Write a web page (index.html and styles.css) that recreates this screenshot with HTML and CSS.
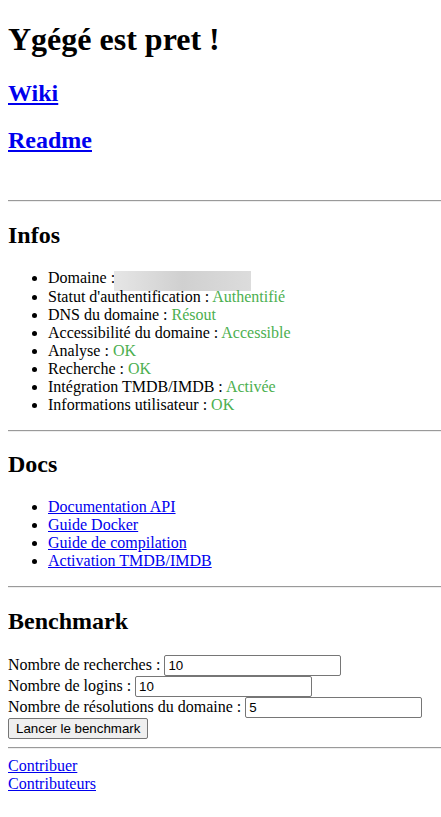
FILE: index.html
```html
<!DOCTYPE html>
<html lang="fr">
<head>
<meta charset="utf-8">
<title>Ygégé</title>
<link rel="stylesheet" href="styles.css">
</head>
<body class="page">
<h1 class="title">Ygégé est pret !</h1>
<h2 class="big-link"><a href="#">Wiki</a></h2>
<h2 class="big-link"><a href="#">Readme</a></h2>
<br>
<hr class="rule">
<h2 class="section-title">Infos</h2>
<ul class="list">
  <li>Domaine :<span class="masked"></span></li>
  <li>Statut d'authentification : <span class="ok">Authentifié</span></li>
  <li>DNS du domaine : <span class="ok">Résout</span></li>
  <li>Accessibilité du domaine : <span class="ok">Accessible</span></li>
  <li>Analyse : <span class="ok">OK</span></li>
  <li>Recherche : <span class="ok">OK</span></li>
  <li>Intégration TMDB/IMDB : <span class="ok">Activée</span></li>
  <li>Informations utilisateur : <span class="ok">OK</span></li>
</ul>
<hr class="rule">
<h2 class="section-title">Docs</h2>
<ul class="list">
  <li><a href="#">Documentation API</a></li>
  <li><a href="#">Guide Docker</a></li>
  <li><a href="#">Guide de compilation</a></li>
  <li><a href="#">Activation TMDB/IMDB</a></li>
</ul>
<hr class="rule">
<h2 class="section-title">Benchmark</h2>
<form class="bench">
  <label>Nombre de recherches : <input class="field" type="text" value="10"></label><br>
  <label>Nombre de logins : <input class="field" type="text" value="10"></label><br>
  <label>Nombre de résolutions du domaine : <input class="field" type="text" value="5"></label><br>
  <button class="btn" type="button">Lancer le benchmark</button>
</form>
<hr class="rule">
<a href="#">Contribuer</a><br>
<a href="#">Contributeurs</a>
</body>
</html>
```
FILE: styles.css
```css
html {
  margin: 0;
  padding: 0;
}
.page {
  margin: 0 0 8px 8px;
  padding: 0;
  font-family: "Liberation Serif", "Times New Roman", serif;
  font-size: 16px;
  color: #000;
  background: #fff;
}
.title {
  font-size: 32px;
  margin: 21.44px 0;
}
.big-link, .section-title {
  font-size: 24px;
  margin: 19.92px 0;
}
a { color: #0000ee; }
.rule {
  border: none;
  border-top: 1px solid #9a9a9a;
  border-bottom: 1px solid #eeeeee;
  margin: 8px 0;
  height: 0;
}
.list {
  margin: 16px 0;
  padding-left: 40px;
}
.ok { color: #4caf50; }
.masked {
  display: inline-block;
  width: 137px;
  height: 20px;
  margin: -3px 0 -3px -1px;
  vertical-align: -5px;
  background: linear-gradient(90deg, #e6e6e6 0%, #d0d0d0 50%, #dcdcdc 100%);
}
.bench { margin: 0; }
.field {
  box-sizing: border-box;
  font-family: "Liberation Sans", Arial, sans-serif;
  font-size: 13.33px;
  width: 177px;
  height: 21px;
  padding: 1px 3px;
  margin: 0;
  border: 1px solid #767676;
  border-radius: 2px;
  color: #000;
  background: #fff;
}
.btn {
  box-sizing: border-box;
  font-family: "Liberation Sans", Arial, sans-serif;
  font-size: 13.33px;
  height: 21px;
  padding: 1px 7px;
  margin: 0;
  border: 1px solid #767676;
  border-radius: 2px;
  background: #efefef;
  color: #000;
}
```
